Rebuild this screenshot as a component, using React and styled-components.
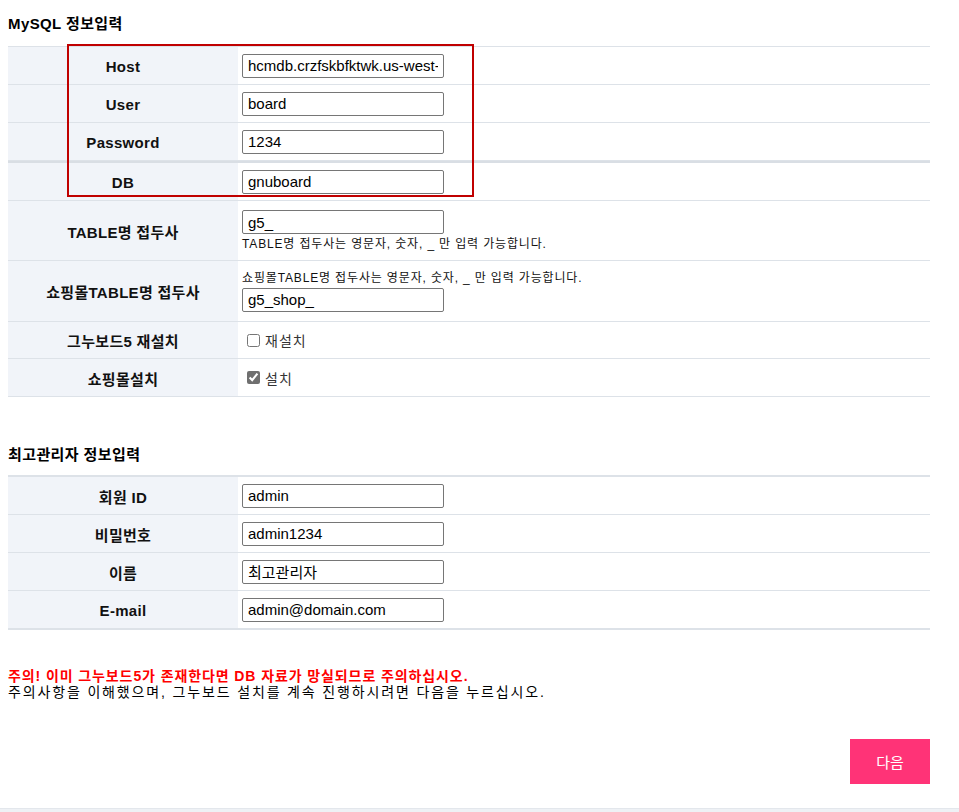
import React from 'react'
import styled, { createGlobalStyle } from 'styled-components'

const GlobalStyle = createGlobalStyle`
  body {
    margin: 0;
    background: #fff;
    font-family: 'Liberation Sans', 'Noto Sans CJK KR', sans-serif;
    color: #000;
  }
`

const mysqlRows = [
  { label: 'Host', value: 'hcmdb.crzfskbfktwk.us-west-2.rds.amazonaws.com' },
  { label: 'User', value: 'board' },
  { label: 'Password', value: '1234' },
  { label: 'DB', value: 'gnuboard', thick: true },
]

const adminRows = [
  { label: '회원 ID', value: 'admin' },
  { label: '비밀번호', value: 'admin1234' },
  { label: '이름', value: '최고관리자' },
  { label: 'E-mail', value: 'admin@domain.com' },
]

function App() {
  return (
    <Page>
      <GlobalStyle />
      <Content>
        <SectionTitle>MySQL 정보입력</SectionTitle>
        <Table>
          {mysqlRows.map((r) => (
            <Row key={r.label} $thick={r.thick}>
              <Label>{r.label}</Label>
              <Cell>
                <Input defaultValue={r.value} />
              </Cell>
            </Row>
          ))}
          <Row $height={59}>
            <Label>TABLE명 접두사</Label>
            <Cell $stack>
              <Input defaultValue="g5_" />
              <Help>TABLE명 접두사는 영문자, 숫자, _ 만 입력 가능합니다.</Help>
            </Cell>
          </Row>
          <Row $height={60}>
            <Label>쇼핑몰TABLE명 접두사</Label>
            <Cell $stack>
              <Help>쇼핑몰TABLE명 접두사는 영문자, 숫자, _ 만 입력 가능합니다.</Help>
              <Input defaultValue="g5_shop_" />
            </Cell>
          </Row>
          <Row $height={36}>
            <Label>그누보드5 재설치</Label>
            <Cell>
              <Check>
                <Box type="checkbox" />
                재설치
              </Check>
            </Cell>
          </Row>
          <Row>
            <Label>쇼핑몰설치</Label>
            <Cell>
              <Check>
                <Box type="checkbox" defaultChecked />
                설치
              </Check>
            </Cell>
          </Row>
          <Highlight />
        </Table>

        <SectionTitle $gap>최고관리자 정보입력</SectionTitle>
        <Table $strong>
          {adminRows.map((r) => (
            <Row key={r.label}>
              <Label>{r.label}</Label>
              <Cell>
                <Input defaultValue={r.value} />
              </Cell>
            </Row>
          ))}
        </Table>

        <Notice>
          <Warning>주의! 이미 그누보드5가 존재한다면 DB 자료가 망실되므로 주의하십시오.</Warning>
          <NoticeText>주의사항을 이해했으며, 그누보드 설치를 계속 진행하시려면 다음을 누르십시오.</NoticeText>
        </Notice>

        <Actions>
          <NextButton type="button">다음</NextButton>
        </Actions>
      </Content>
      <Footer />
    </Page>
  )
}

const Page = styled.div`
  width: 100%;
  min-height: 812px;
  display: flex;
  flex-direction: column;
`

const Content = styled.div`
  width: 922px;
  margin-left: 8px;
  padding-top: 14px;
  display: flex;
  flex-direction: column;
`

const SectionTitle = styled.h2`
  margin: ${(p) => (p.$gap ? '48px 0 10px' : '0 0 12px')};
  font-size: 15px;
  line-height: 20px;
  font-weight: bold;
  letter-spacing: 0.4px;
  color: #000;
`

const Table = styled.div`
  position: relative;
  display: flex;
  flex-direction: column;
  border-top: ${(p) => (p.$strong ? '2px' : '1px')} solid #dde2e8;
  ${(p) => p.$strong && 'border-bottom: 1px solid #dde2e8;'}
`

const Row = styled.div`
  display: grid;
  grid-template-columns: 230px 1fr;
  height: ${(p) => p.$height || 37}px;
  border-top: ${(p) => (p.$thick ? '2px solid #d9dee4' : 'none')};
  border-bottom: 1px solid #dde2e8;
`

const Label = styled.div`
  background: #f1f4f9;
  display: flex;
  align-items: center;
  justify-content: center;
  padding-top: 1px;
  font-size: 15px;
  font-weight: bold;
  letter-spacing: 0.3px;
  color: #111;
`

const Cell = styled.div`
  display: flex;
  flex-direction: ${(p) => (p.$stack ? 'column' : 'row')};
  justify-content: ${(p) => (p.$stack ? 'center' : 'flex-start')};
  align-items: ${(p) => (p.$stack ? 'flex-start' : 'center')};
  padding-left: 4px;
  gap: ${(p) => (p.$stack ? '3px' : '0')};
`

const Input = styled.input`
  box-sizing: border-box;
  width: 202px;
  height: 24px;
  padding: 0 5px;
  border: 1px solid #767676;
  border-radius: 2px;
  font-family: 'Liberation Sans', 'Noto Sans CJK KR', sans-serif;
  font-size: 15px;
  color: #000;
  background: #fff;
  outline: none;
`

const Help = styled.span`
  font-size: 12px;
  line-height: 14px;
  letter-spacing: 0.85px;
  color: #111;
`

const Check = styled.label`
  display: flex;
  align-items: center;
  gap: 5px;
  padding-left: 5px;
  font-size: 14px;
  letter-spacing: 1px;
  color: #333;
`

const Box = styled.input`
  margin: 0;
  width: 13px;
  height: 13px;
  accent-color: #6f6f6f;
`

const Highlight = styled.div`
  position: absolute;
  left: 59px;
  top: -3px;
  width: 403px;
  height: 149px;
  border: 2px solid #c00000;
  pointer-events: none;
`

const Notice = styled.div`
  margin-top: 38px;
  display: flex;
  flex-direction: column;
  font-size: 14px;
  line-height: 16px;
`

const Warning = styled.p`
  margin: 0;
  font-weight: bold;
  letter-spacing: 0.9px;
  color: #ff0000;
`

const NoticeText = styled.p`
  margin: 0;
  letter-spacing: 1.85px;
  color: #000;
`

const Actions = styled.div`
  display: flex;
  justify-content: flex-end;
  margin-top: 39px;
`

const NextButton = styled.button`
  width: 80px;
  height: 45px;
  border: none;
  background: #ff3377;
  color: #fff;
  font-family: 'Liberation Sans', 'Noto Sans CJK KR', sans-serif;
  font-size: 15px;
  cursor: pointer;
`

const Footer = styled.div`
  margin-top: auto;
  height: 3px;
  border-top: 1px solid #e3e7ec;
  background: #eef1f5;
`

export default App
